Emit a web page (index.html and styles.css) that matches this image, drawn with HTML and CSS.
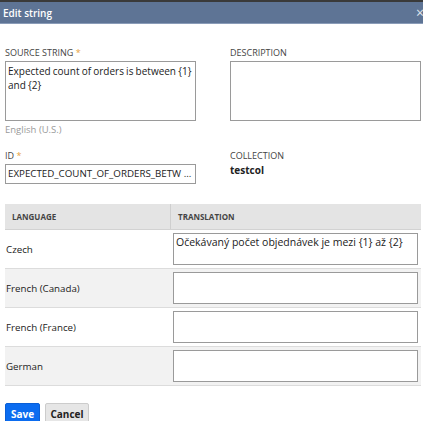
FILE: index.html
```html
<!DOCTYPE html>
<html>
<head>
<meta charset="utf-8">
<link rel="stylesheet" href="styles.css">
</head>
<body>
<div class="topstrip"></div>
<div class="dialog">
  <div class="header">
    <span class="title">Edit string</span>
    <span class="close">×</span>
  </div>
  <div class="body">
    <div class="row2">
      <div class="field">
        <div class="label">SOURCE STRING <span class="req">*</span></div>
        <div class="textarea">Expected count of orders is between {1} and {2}</div>
        <div class="hint">English (U.S.)</div>
      </div>
      <div class="field">
        <div class="label">DESCRIPTION</div>
        <div class="textarea"></div>
      </div>
    </div>
    <div class="row2 second">
      <div class="field">
        <div class="label">ID <span class="req">*</span></div>
        <div class="input">EXPECTED_COUNT_OF_ORDERS_BETW ...</div>
      </div>
      <div class="field">
        <div class="label">COLLECTION</div>
        <div class="value">testcol</div>
      </div>
    </div>
    <div class="table">
      <div class="thead">
        <div class="th lang">LANGUAGE</div>
        <div class="th trans">TRANSLATION</div>
      </div>
      <div class="tr">
        <div class="td lang">Czech</div>
        <div class="td trans"><div class="tbox">Očekávaný počet objednávek je mezi {1} až {2}</div></div>
      </div>
      <div class="tr alt">
        <div class="td lang">French (Canada)</div>
        <div class="td trans"><div class="tbox"></div></div>
      </div>
      <div class="tr">
        <div class="td lang">French (France)</div>
        <div class="td trans"><div class="tbox"></div></div>
      </div>
      <div class="tr alt">
        <div class="td lang">German</div>
        <div class="td trans"><div class="tbox"></div></div>
      </div>
    </div>
    <div class="buttons">
      <button class="btn save">Save</button>
      <button class="btn cancel">Cancel</button>
    </div>
  </div>
</div>
</body>
</html>
```
FILE: styles.css
```css
* { box-sizing: border-box; }
html, body {
  margin: 0;
  padding: 0;
  background: #ffffff;
  overflow: hidden;
}
body {
  font-family: "Open Sans", "Liberation Sans", sans-serif;
  color: #333333;
  width: 423px;
  height: 421px;
}
.topstrip {
  height: 2px;
  background: #3a3a3a;
}
.header {
  height: 22px;
  background: #5e7495;
  border-bottom: 1px solid #8a9cb8;
  display: flex;
  align-items: center;
  padding: 0 0 0 3px;
  position: relative;
}
.title {
  color: #ffffff;
  font-weight: 600;
  font-size: 10px;
}
.close {
  color: #dfe5ee;
  font-size: 14px;
  line-height: 14px;
  position: absolute;
  left: 416px;
  top: 4px;
}
.body {
  padding: 23px 2px 0 5px;
}
.row2 {
  display: flex;
  gap: 34px;
}
.field {
  width: 191px;
}
.label {
  font-size: 9px;
  line-height: 12px;
  color: #444;
  margin-bottom: 2px;
}
.req { color: #e8a23c; }
.textarea {
  height: 60px;
  border: 1px solid #9a9a9a;
  padding: 3px 0 2px 2px;
  font-size: 10px;
  line-height: 13.5px;
  word-spacing: -0.4px;
  color: #222;
}
.hint {
  font-size: 9.5px;
  color: #9a9a9a;
  margin-top: 2px;
}
.second { margin-top: 14px; }
.input {
  height: 20px;
  border: 1px solid #9a9a9a;
  padding: 0 2px;
  font-size: 9.75px;
  line-height: 18px;
  color: #222;
  white-space: nowrap;
  overflow: hidden;
}
.value {
  font-size: 10px;
  font-weight: 700;
  color: #222;
  margin-top: -1px;
}
.table {
  margin-top: 20px;
  width: 416px;
}
.thead {
  display: flex;
  height: 26px;
  background: #e4e4e4;
  border-bottom: 1px solid #d2d2d2;
}
.th {
  font-size: 8px;
  font-weight: 700;
  color: #444;
  display: flex;
  align-items: center;
  padding-left: 7px;
}
.th.lang { width: 166px; border-right: 1px solid #cfcfcf; }
.th.trans { flex: 1; }
.tr {
  display: flex;
  height: 39px;
  border-bottom: 1px solid #dcdcdc;
  background: #ffffff;
}
.tr.alt { background: #f2f2f2; }
.td {
  display: flex;
  align-items: center;
}
.td.lang {
  width: 169px;
  padding-left: 1px;
  font-size: 9.75px;
  color: #222;
}
.td.trans {
  flex: 1;
  padding: 3px 3px 3px 0;
  align-items: stretch;
}
.tbox {
  width: 245px;
  border: 1px solid #9a9a9a;
  background: #fff;
  padding: 2px 2px;
  font-size: 10.5px;
  line-height: 13px;
  color: #222;
}
.buttons {
  display: flex;
  gap: 5px;
  margin-top: 17px;
}
.btn {
  font-family: inherit;
  font-size: 10px;
  font-weight: 700;
  height: 22px;
  padding: 0 4px;
  border-radius: 2px;
  cursor: pointer;
}
.save {
  background: #0b6cf0;
  color: #fff;
  border: 1px solid #0a5fd6;
  width: 35px;
}
.cancel {
  background: #e6e6e6;
  color: #222;
  border: 1px solid #cccccc;
  width: 44px;
}
```
